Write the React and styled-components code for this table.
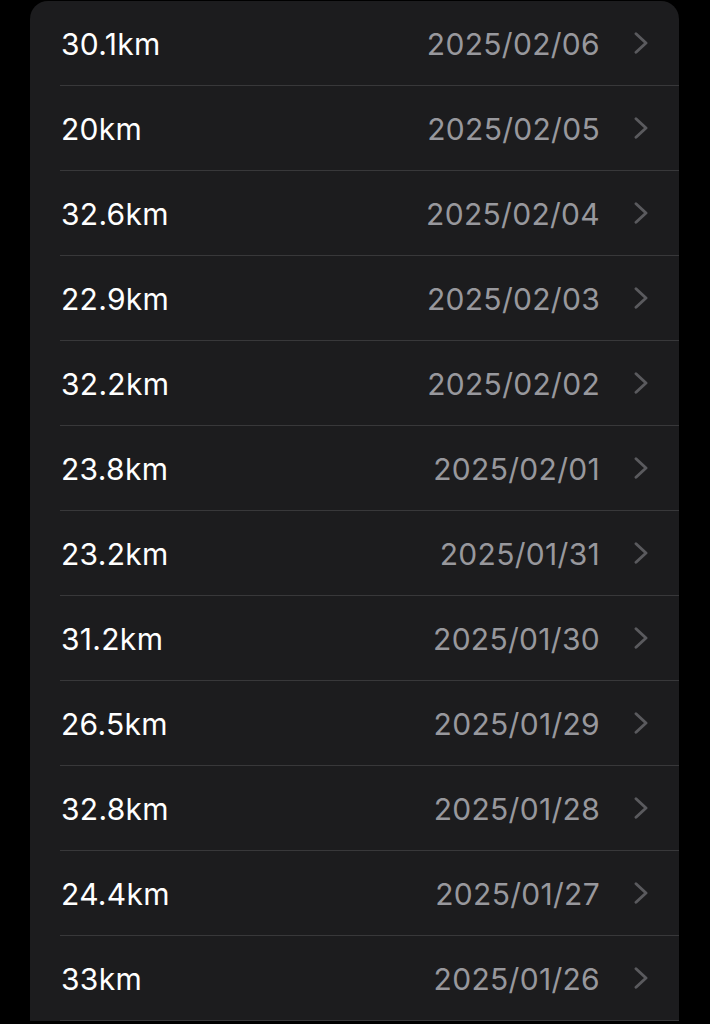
import React from 'react';
import styled, { createGlobalStyle } from 'styled-components';

const GlobalStyle = createGlobalStyle`
  html, body {
    margin: 0;
    padding: 0;
    background: #000;
  }
  body {
    font-family: Inter, "Noto Sans", "Liberation Sans", sans-serif;
    -webkit-font-smoothing: antialiased;
  }
`;

const Page = styled.div`
  min-height: 1024px;
  background: #000;
  padding: 1px 31px 0 30px;
  box-sizing: border-box;
`;

const Card = styled.div`
  background: #1c1c1e;
  border-radius: 18px 18px 0 0;
  overflow: hidden;
`;

const Row = styled.div`
  display: flex;
  align-items: center;
  padding-left: 30px;
  height: 85px;
  cursor: pointer;
`;

const Inner = styled.div`
  flex: 1;
  height: 100%;
  display: flex;
  align-items: center;
  padding-left: 1px;
  padding-right: 31px;
  box-sizing: border-box;
  border-bottom: 1px solid #38383a;
`;

const Distance = styled.div`
  flex: 1;
  color: #fff;
  font-size: 30px;
  letter-spacing: 0.3px;
  padding-top: 2px;
`;

const DateText = styled.div`
  color: #98989d;
  font-size: 30px;
  letter-spacing: 0.3px;
  margin-right: 34px;
  padding-top: 2px;
`;

const Chevron = () => (
  <svg width="14" height="22" viewBox="0 0 14 22" fill="none">
    <path
      d="M2 1.8L12 11 2 20.2"
      stroke="#5a5a5e"
      strokeWidth="2.9"
      strokeLinecap="round"
      strokeLinejoin="round"
    />
  </svg>
);

const runs = [
  ['30.1km', '2025/02/06'],
  ['20km', '2025/02/05'],
  ['32.6km', '2025/02/04'],
  ['22.9km', '2025/02/03'],
  ['32.2km', '2025/02/02'],
  ['23.8km', '2025/02/01'],
  ['23.2km', '2025/01/31'],
  ['31.2km', '2025/01/30'],
  ['26.5km', '2025/01/29'],
  ['32.8km', '2025/01/28'],
  ['24.4km', '2025/01/27'],
  ['33km', '2025/01/26'],
];

const App = () => (
  <>
    <GlobalStyle />
    <Page>
      <Card>
        {runs.map(([km, date]) => (
          <Row key={date}>
            <Inner>
              <Distance>{km}</Distance>
              <DateText>{date}</DateText>
              <Chevron />
            </Inner>
          </Row>
        ))}
      </Card>
    </Page>
  </>
);

export default App;
